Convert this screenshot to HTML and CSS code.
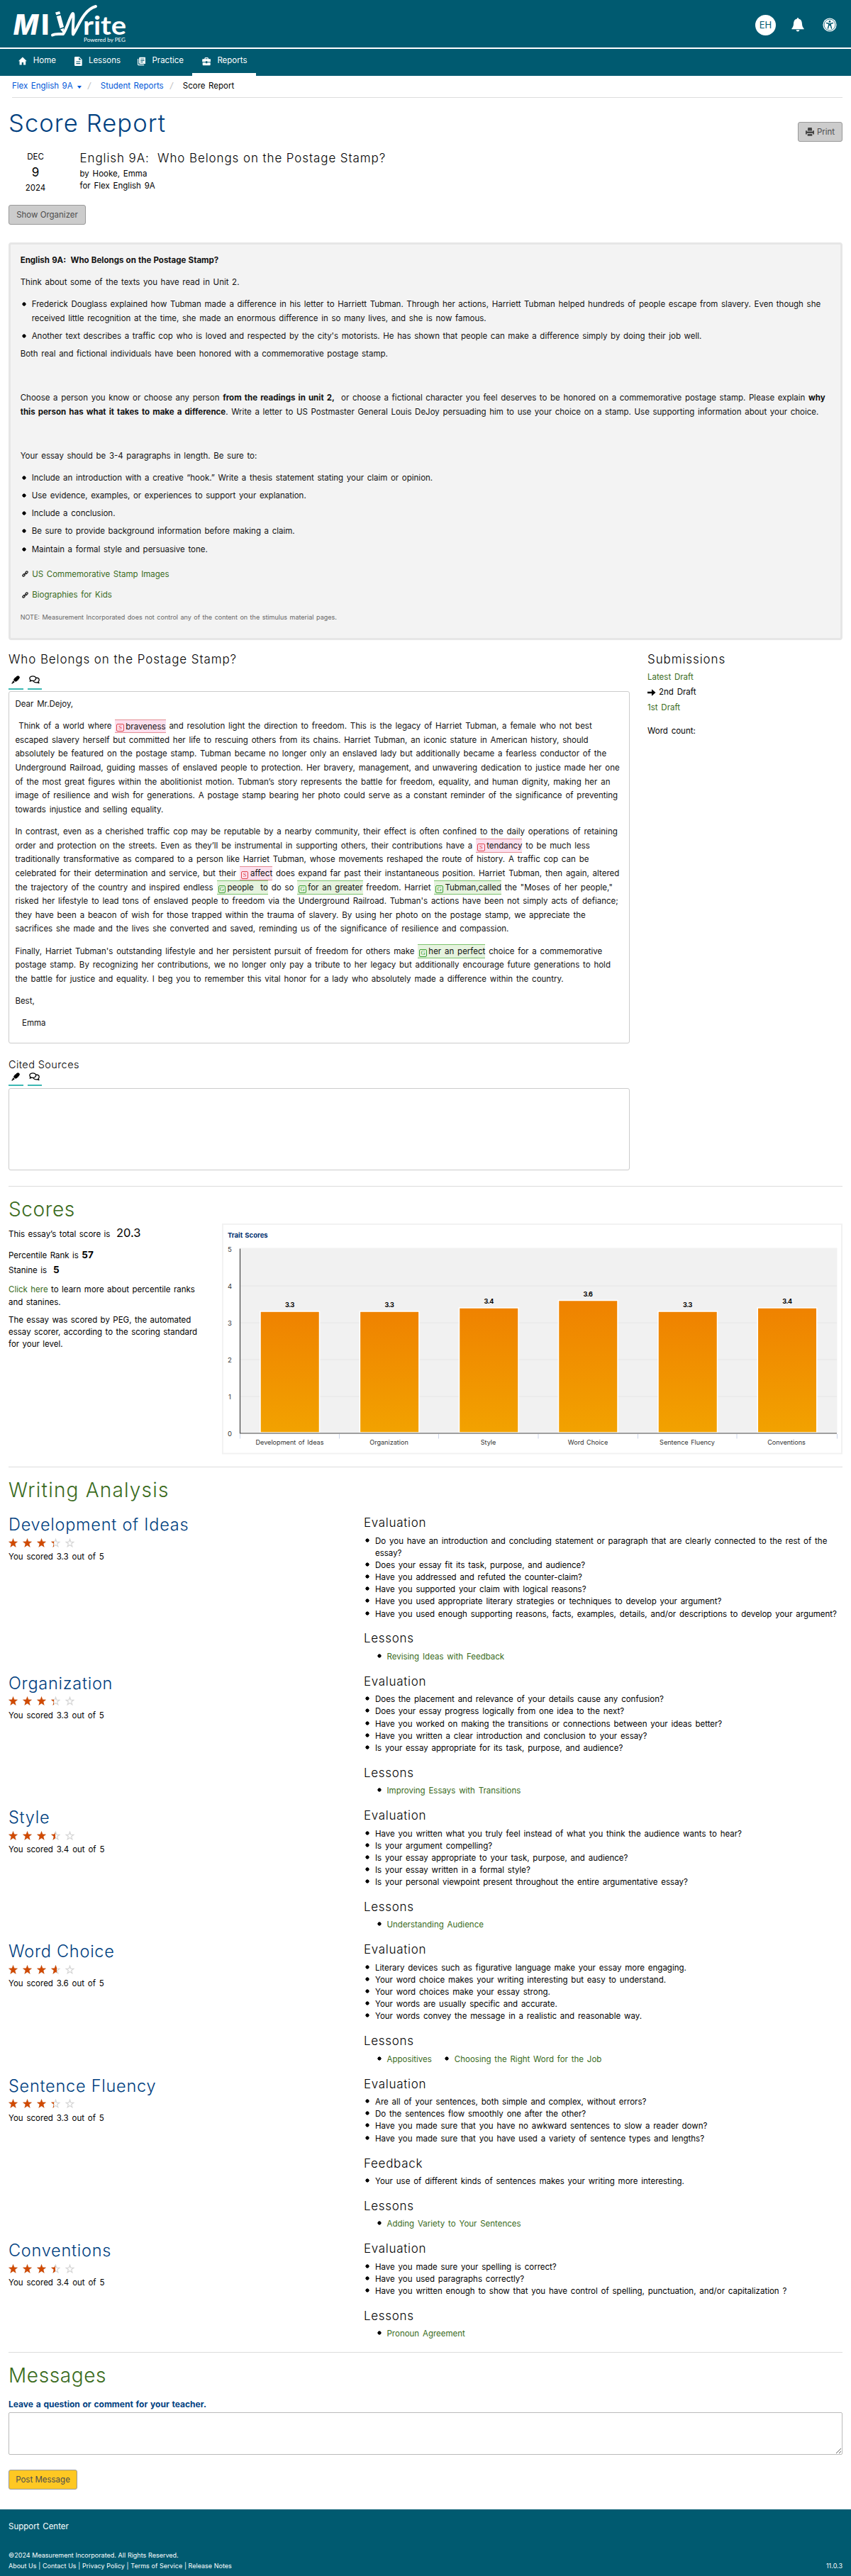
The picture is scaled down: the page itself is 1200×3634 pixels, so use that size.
FILE: index.html
```
<!DOCTYPE html>
<html lang="en">
<head>
    <meta charset="UTF-8">
    <meta name="viewport" content="width=device-width, initial-scale=1.0">
    <title>MI Write - Score Report</title>
    <link rel="stylesheet" href="styles.css">
</head>
<body>
    <!-- shared icons -->
    <svg class="defs" width="0" height="0">
        <symbol id="star" viewBox="0 0 12 12"><path d="M6 0 7.5 4.2 12 4.4 8.5 7.200 9.700 11.800 6 9.200 2.300 11.800 3.500 7.200 0 4.400 4.500 4.200Z"/></symbol>
        <symbol id="star-o" viewBox="0 0 12 12"><path d="M6 1.2 7.2 4.700 11 4.900 8 7.200 9.100 10.900 6 8.800 2.900 10.900 4 7.200 1 4.900 4.800 4.700Z" fill="none" stroke="#d6d6d6" stroke-width="1.1"/></symbol>
        <symbol id="stars5" viewBox="0 0 93 13"><use href="#star" x="0" width="13" height="13"/><use href="#star" x="20" width="13" height="13"/><use href="#star" x="40" width="13" height="13"/><use href="#star" x="60" width="13" height="13"/><use href="#star" x="80" width="13" height="13"/></symbol>
        <symbol id="stars5-o" viewBox="0 0 93 13"><use href="#star-o" x="0" width="13" height="13"/><use href="#star-o" x="20" width="13" height="13"/><use href="#star-o" x="40" width="13" height="13"/><use href="#star-o" x="60" width="13" height="13"/><use href="#star-o" x="80" width="13" height="13"/></symbol>
        <symbol id="marker" viewBox="0 0 12 12"><path d="M7 1.2 9.3.3Q10 0 10.6.7L11.6 1.7Q12.1 2.3 11.8 3L10.4 5.4 6.6 5.2ZM6.2 1.9 10 5.9 7.6 8.1Q7 8.6 6.2 8.6L5 8.6 3.2 6.8 3.3 5.6Q3.4 4.8 4 4.2ZM2.6 7.3 4.6 9.3 3.6 10.3 2.9 10.2 1.6 11.5 0 11.2 1.9 9 1.8 8.2Z"/></symbol>
        <symbol id="comments" viewBox="0 0 15 12"><path d="M5.3.8C2.700.8.8 2.300.8 4.100.8 5 1.300 5.700 1.900 6.300L1.200 8.200 3.500 7.200C6.800 7.900 9.700 6.300 9.700 4 9.700 2.200 7.800.8 5.300.8ZM10.300 3C12.600 3.200 14.200 4.600 14.200 6.300 14.200 7.200 13.800 8 13.100 8.600L13.900 10.600 11.500 9.600C9 10.200 6.800 9.400 5.900 7.700" fill="none" stroke="#000" stroke-width="1.300" stroke-linejoin="round"/></symbol>
        <symbol id="link" viewBox="0 0 10 10"><path d="M5.400 2.700 6.800 1.300Q7.800.6 8.600 1.400 9.400 2.200 8.700 3.200L7 4.900Q6.300 5.400 5.600 4.900M4.600 7.300 3.200 8.700Q2.200 9.400 1.400 8.600.6 7.800 1.300 6.800L3 5.100Q3.700 4.600 4.400 5.100M3.900 6.100 6.100 3.900" fill="none" stroke="#222" stroke-width="1.500" stroke-linecap="round"/></symbol>
    </svg>

    <header class="top">
        <svg class="logo" width="165" height="54" viewBox="0 0 165 54">
            <text class="logo-m" transform="translate(0 43) skewX(-10)" textLength="35" lengthAdjust="spacingAndGlyphs">M</text>
            <text class="logo-m" x="41" y="43">I</text>
            <path d="M61 11.500 67 10 68.300 13.500 62.300 15.200ZM62.800 17 68.600 15.400 73 32 67.500 34ZM67.900 35.600 73 33.700 72.500 40.500Z" fill="#fff"/>
            <path d="M57 43.500C62 41 68 42.500 72 42 78 34 81 18 85.500 13 88 12 85 36 86 42.500 93 33 100 8 118 3" fill="none" stroke="#fff" stroke-width="4" stroke-linecap="round" stroke-linejoin="round"/>
            <text class="logo-rite" x="100" y="43" textLength="61" lengthAdjust="spacingAndGlyphs">rite</text>
            <text class="logo-peg" x="101" y="53" textLength="59" lengthAdjust="spacingAndGlyphs">Powered by PEG</text>
        </svg>
        <div class="tools">
            <span class="avatar">EH</span>
            <svg class="bell" width="18" height="20" viewBox="0 0 18 20" fill="#fff"><path d="M9 0Q10.200 0 10.200 1.600C14 2.500 14.800 5.500 15 9 15.200 12 16 13.500 17.600 15.200V16.300H.4V15.200C2 13.500 2.800 12 3 9 3.200 5.500 4 2.500 7.800 1.600Q7.800 0 9 0ZM6.600 17.300H11.400Q11 19.600 9 19.600T6.600 17.300Z"/></svg>
            <svg width="20" height="20" viewBox="0 0 20 20"><circle cx="10" cy="10" r="9.600" fill="#fff"/><circle cx="10" cy="10" r="7.900" fill="none" stroke="#005a70" stroke-width=".8"/><circle cx="10" cy="5.400" r="1.400" fill="#005a70"/><path d="M5.500 7.500 8.700 8.200 8.700 10.500 7.500 15M14.500 7.500 11.300 8.200 11.300 10.500 12.500 15M8.600 8.700H11.400M9 10.500H11" fill="none" stroke="#005a70" stroke-width="1.400" stroke-linecap="round"/></svg>
        </div>
    </header>
    <nav class="nav">
        <a class="home"><svg width="12" height="12" viewBox="0 0 12 12"><path d="M6 .3 12 6.200H10.400V11.700H7.200V8H4.800V11.700H1.600V6.200H0Z"/></svg>Home</a>
        <a class="lessons"><svg width="11" height="13" viewBox="0 0 11 13"><path fill-rule="evenodd" d="M1.200 0H6.800L10.800 4V11.800Q10.800 13 9.600 13H1.200Q0 13 0 11.800V1.200Q0 0 1.200 0ZM6.200 1V4.600H9.800ZM2.400 6.500V7.600H8.400V6.500ZM2.400 9.100V10.200H8.400V9.100Z"/></svg>Lessons</a>
        <a class="practice"><svg width="13" height="13" viewBox="0 0 13 13"><path fill-rule="evenodd" d="M0 2.600H1.300V11.700H10.400V13H1.300Q0 13 0 11.700ZM3.800 0H11.700Q13 0 13 1.300V9.200Q13 10.500 11.700 10.500H3.800Q2.500 10.500 2.500 9.200V1.300Q2.500 0 3.800 0ZM4.700 2.300V3.400H10.800V2.300ZM4.700 4.700V5.800H10.800V4.700ZM4.700 7.100V8.200H8.600V7.100Z"/></svg>Practice</a>
        <a class="reports active"><svg width="13" height="13" viewBox="0 0 13 13"><path fill-rule="evenodd" d="M4.700.8H8.300L9.400 1.900V3.200H11.900Q12.800 3.200 12.800 4.200V7.400H7.700V6.300H5.300V7.400H.2V4.200Q.2 3.200 1.100 3.200H3.600V1.900ZM4.900 2.100V3.200H8.100V2.100ZM.7 8.300H5.300V9.500H7.700V8.300H12.300V11.500Q12.300 12.500 11.300 12.500H1.700Q.7 12.500.7 11.500Z"/></svg>Reports</a>
    </nav>

    <main>
        <div class="breadcrumb">
            <a>Flex English 9A</a><span class="caret"></span><i>/</i><a>Student Reports</a><i>/</i><span>Score Report</span>
        </div>
        <div class="title-row">
            <h1>Score Report</h1>
            <button class="btn print"><svg width="12" height="12" viewBox="0 0 12 12"><path d="M3.300 0H8.700L9.200 4.500H2.800ZM0 4.200H1.800V5.500H10.200V4.200H12V9.600H10.300V8H1.700V9.600H0ZM2.700 9H9.300V11.800H2.700Z"/></svg>Print</button>
        </div>
        <div class="meta">
            <div class="date">DEC<b>9</b>2024</div>
            <div class="info">
                <h2>English 9A:&nbsp; Who Belongs on the Postage Stamp?</h2>
                <div>by Hooke, Emma</div>
                <div>for Flex English 9A</div>
            </div>
        </div>
        <button class="btn organizer">Show Organizer</button>

        <div class="stimulus">
            <p class="strong">English 9A:&nbsp; Who Belongs on the Postage Stamp?</p>
            <p>Think about some of the texts you have read in Unit 2.</p>
            <ul>
                <li>Frederick Douglass explained how Tubman made a difference in his letter to Harriett Tubman. Through her actions, Harriett Tubman helped hundreds of people escape from slavery. Even though she<br>received little recognition at the time, she made an enormous difference in so many lives, and she is now famous.</li>
                <li>Another text describes a traffic cop who is loved and respected by the city's motorists. He has shown that people can make a difference simply by doing their job well.</li>
            </ul>
            <p>Both real and fictional individuals have been honored with a commemorative postage stamp.</p>
            <p>&nbsp;</p>
            <p>Choose a person you know or choose any person <b>from the readings in unit 2,</b>&nbsp; or choose a fictional character you feel deserves to be honored on a commemorative postage stamp. Please explain <b>why</b><br><b>this person has what it takes to make a difference</b>. Write a letter to US Postmaster General Louis DeJoy persuading him to use your choice on a stamp. Use supporting information about your choice.</p>
            <p>&nbsp;</p>
            <p>Your essay should be 3-4 paragraphs in length. Be sure to:</p>
            <ul>
                <li>Include an introduction with a creative “hook.” Write a thesis statement stating your claim or opinion.</li>
                <li>Use evidence, examples, or experiences to support your explanation.</li>
                <li>Include a conclusion.</li>
                <li>Be sure to provide background information before making a claim.</li>
                <li>Maintain a formal style and persuasive tone.</li>
            </ul>
            <div class="links">
                <div><svg width="9" height="9"><use href="#link"/></svg><a>US Commemorative Stamp Images</a></div>
                <div><svg width="9" height="9"><use href="#link"/></svg><a>Biographies for Kids</a></div>
            </div>
            <div class="note">NOTE: Measurement Incorporated does not control any of the content on the stimulus material pages.</div>
        </div>

        <div class="essay-row">
            <div class="essay-col">
                <h3>Who Belongs on the Postage Stamp?</h3>
                <div class="toolbar"><span><svg width="12" height="12"><use href="#marker"/></svg></span><span><svg width="15" height="12"><use href="#comments"/></svg></span></div>
                <div class="essay">
                    <p>Dear Mr.Dejoy,</p>
                    <p>&nbsp;Think of a world where <mark class="sp"><i>S</i>braveness</mark> and resolution light the direction to freedom. This is the legacy of Harriet Tubman, a female who not best<br>
                    escaped slavery herself but committed her life to rescuing others from its chains. Harriet Tubman, an iconic stature in American history, should<br>
                    absolutely be featured on the postage stamp. Tubman became no longer only an enslaved lady but additionally became a fearless conductor of the<br>
                    Underground Railroad, guiding masses of enslaved people to protection. Her bravery, management, and unwavering dedication to justice made her one<br>
                    of the most great figures within the abolitionist motion. Tubman’s story represents the battle for freedom, equality, and human dignity, making her an<br>
                    image of resilience and wish for generations. A postage stamp bearing her photo could serve as a constant reminder of the significance of preventing<br>
                    towards injustice and selling equality.</p>
                    <p>In contrast, even as a cherished traffic cop may be reputable by a nearby community, their effect is often confined to the daily operations of retaining<br>
                    order and protection on the streets. Even as they’ll be instrumental in supporting others, their contributions have a <mark class="sp"><i>S</i>tendancy</mark> to be much less<br>
                    traditionally transformative as compared to a person like Harriet Tubman, whose movements reshaped the route of history. A traffic cop can be<br>
                    celebrated for their determination and service, but their <mark class="sp"><i>S</i>affect</mark> does expand far past their instantaneous position. Harriet Tubman, then again, altered<br>
                    the trajectory of the country and inspired endless <mark class="gr"><i>G</i>people&nbsp; to</mark> do so <mark class="gr"><i>G</i>for an greater</mark> freedom. Harriet <mark class="gr"><i>G</i>Tubman,called</mark> the "Moses of her people,"<br>
                    risked her lifestyle to lead tons of enslaved people to freedom via the Underground Railroad. Tubman's actions have been not simply acts of defiance;<br>
                    they have been a beacon of wish for those trapped within the trauma of slavery. By using her photo on the postage stamp, we appreciate the<br>
                    sacrifices she made and the lives she converted and saved, reminding us of the significance of resilience and compassion.</p>
                    <p>Finally, Harriet Tubman's outstanding lifestyle and her persistent pursuit of freedom for others make <mark class="gr"><i>G</i>her an perfect</mark> choice for a commemorative<br>
                    postage stamp. By recognizing her contributions, we no longer only pay a tribute to her legacy but additionally encourage future generations to hold<br>
                    the battle for justice and equality. I beg you to remember this vital honor for a lady who absolutely made a difference within the country.</p>
                    <p>Best,</p>
                    <p>&nbsp; Emma</p>
                </div>
                <h4 class="cited-title">Cited Sources</h4>
                <div class="toolbar"><span><svg width="12" height="12"><use href="#marker"/></svg></span><span><svg width="15" height="12"><use href="#comments"/></svg></span></div>
                <div class="cited"></div>
            </div>
            <div class="submissions">
                <h3>Submissions</h3>
                <div><a>Latest Draft</a></div>
                <div><svg width="12" height="10" viewBox="0 0 12 10"><path d="M0 3.800H6V.3L11.500 5 6 9.700V6.200H0Z"/></svg>2nd Draft</div>
                <div><a>1st Draft</a></div>
                <div class="count">Word count:</div>
            </div>
        </div>

        <hr>
        <h2 class="section">Scores</h2>
        <div class="scores">
            <div class="score-text">
                <div class="total">This essay’s total score is <span>20.3</span></div>
                <div class="rank">Percentile Rank is <b>57</b></div>
                <div class="rank">Stanine is&nbsp; <b>5</b></div>
                <p><a>Click here</a> to learn more about percentile ranks<br>and stanines.</p>
                <p>The essay was scored by PEG, the automated<br>essay scorer, according to the scoring standard<br>for your level.</p>
            </div>
            <svg class="chart" width="875" height="325.5" viewBox="313 1726.500 875 325.500">
                <defs><linearGradient id="bar" x1="0" y1="0" x2="0" y2="1"><stop offset="0" stop-color="#ef8200"/><stop offset="1" stop-color="#f2a200"/></linearGradient></defs>
                <rect x="314" y="1727.500" width="873" height="323.500" fill="#fff" stroke="#f2f2f2" stroke-width="2"/>
                <text class="chart-title" x="321" y="1746.500">Trait Scores</text>
                <rect x="339" y="1761" width="841.500" height="261" fill="#f1f1f1"/>
                <path d="M339 1814.500H1180M339 1866.500H1180M339 1918.500H1180M339 1970.500H1180" stroke="#e6e6e6"/>
                <g fill="url(#bar)" stroke="#fff" stroke-width="1.500">
                    <rect x="367" y="1850.500" width="83.500" height="171"/>
                    <rect x="507.400" y="1850.500" width="83.500" height="171"/>
                    <rect x="647.500" y="1845.500" width="83.500" height="176"/>
                    <rect x="787.500" y="1835" width="83.500" height="186.500"/>
                    <rect x="928" y="1850.500" width="83.500" height="171"/>
                    <rect x="1068.300" y="1845.500" width="83.500" height="176"/>
                </g>
                <path d="M338.500 1762V2022.500H1180" fill="none" stroke="#444" stroke-width="1.200"/>
                <path d="M338.500 2023.500V2030M478.500 2023.500V2030M618.500 2023.500V2030M759 2023.500V2030M899.500 2023.500V2030M1039 2023.500V2030M1180.500 2023.500V2030" stroke="#ccd6eb"/>
                <g class="axis">
                    <text x="324" y="1766">5</text><text x="324" y="1818">4</text><text x="324" y="1870.500">3</text><text x="324" y="1922">2</text><text x="324" y="1974">1</text><text x="324" y="2026">0</text>
                </g>
                <g class="val">
                    <text x="408.500" y="1844.500">3.3</text><text x="549" y="1844.500">3.3</text><text x="689.300" y="1839.500">3.4</text><text x="829" y="1829.500">3.6</text><text x="969.500" y="1844.500">3.3</text><text x="1110" y="1839.500">3.4</text>
                </g>
                <g class="cat">
                    <text x="408.500" y="2038.500">Development of Ideas</text><text x="548.500" y="2038.500">Organization</text><text x="688.500" y="2038.500">Style</text><text x="829" y="2038.500">Word Choice</text><text x="969" y="2038.500">Sentence Fluency</text><text x="1109" y="2038.500">Conventions</text>
                </g>
            </svg>
        </div>

        <hr class="hr-analysis">
        <h2 class="section analysis-title">Writing Analysis</h2>
        <div class="trait">
            <div>
                <h3>Development of Ideas</h3>
                <div class="stars"><svg><use href="#stars5-o"/></svg><div class="fill" style="width: 64px"><svg><use href="#stars5"/></svg></div></div>
                <div>You scored 3.3 out of 5</div>
            </div>
            <div>
                <h4>Evaluation</h4>
                <ul>
                    <li>Do you have an introduction and concluding statement or paragraph that are clearly connected to the rest of the<br>essay?</li>
                    <li>Does your essay fit its task, purpose, and audience?</li>
                    <li>Have you addressed and refuted the counter-claim?</li>
                    <li>Have you supported your claim with logical reasons?</li>
                    <li>Have you used appropriate literary strategies or techniques to develop your argument?</li>
                    <li>Have you used enough supporting reasons, facts, examples, details, and/or descriptions to develop your argument?</li>
                </ul>
                <h4>Lessons</h4>
                <ul class="lesson"><li><a>Revising Ideas with Feedback</a></li></ul>
            </div>
        </div>
        <div class="trait">
            <div>
                <h3>Organization</h3>
                <div class="stars"><svg><use href="#stars5-o"/></svg><div class="fill" style="width: 64px"><svg><use href="#stars5"/></svg></div></div>
                <div>You scored 3.3 out of 5</div>
            </div>
            <div>
                <h4>Evaluation</h4>
                <ul>
                    <li>Does the placement and relevance of your details cause any confusion?</li>
                    <li>Does your essay progress logically from one idea to the next?</li>
                    <li>Have you worked on making the transitions or connections between your ideas better?</li>
                    <li>Have you written a clear introduction and conclusion to your essay?</li>
                    <li>Is your essay appropriate for its task, purpose, and audience?</li>
                </ul>
                <h4>Lessons</h4>
                <ul class="lesson"><li><a>Improving Essays with Transitions</a></li></ul>
            </div>
        </div>
        <div class="trait">
            <div>
                <h3>Style</h3>
                <div class="stars"><svg><use href="#stars5-o"/></svg><div class="fill" style="width: 65.5px"><svg><use href="#stars5"/></svg></div></div>
                <div>You scored 3.4 out of 5</div>
            </div>
            <div>
                <h4>Evaluation</h4>
                <ul>
                    <li>Have you written what you truly feel instead of what you think the audience wants to hear?</li>
                    <li>Is your argument compelling?</li>
                    <li>Is your essay appropriate to your task, purpose, and audience?</li>
                    <li>Is your essay written in a formal style?</li>
                    <li>Is your personal viewpoint present throughout the entire argumentative essay?</li>
                </ul>
                <h4>Lessons</h4>
                <ul class="lesson"><li><a>Understanding Audience</a></li></ul>
            </div>
        </div>
        <div class="trait">
            <div>
                <h3>Word Choice</h3>
                <div class="stars"><svg><use href="#stars5-o"/></svg><div class="fill" style="width: 68px"><svg><use href="#stars5"/></svg></div></div>
                <div>You scored 3.6 out of 5</div>
            </div>
            <div>
                <h4>Evaluation</h4>
                <ul>
                    <li>Literary devices such as figurative language make your essay more engaging.</li>
                    <li>Your word choice makes your writing interesting but easy to understand.</li>
                    <li>Your word choices make your essay strong.</li>
                    <li>Your words are usually specific and accurate.</li>
                    <li>Your words convey the message in a realistic and reasonable way.</li>
                </ul>
                <h4>Lessons</h4>
                <ul class="lesson"><li><a>Appositives</a></li><li><a>Choosing the Right Word for the Job</a></li></ul>
            </div>
        </div>
        <div class="trait">
            <div>
                <h3>Sentence Fluency</h3>
                <div class="stars"><svg><use href="#stars5-o"/></svg><div class="fill" style="width: 64px"><svg><use href="#stars5"/></svg></div></div>
                <div>You scored 3.3 out of 5</div>
            </div>
            <div>
                <h4>Evaluation</h4>
                <ul>
                    <li>Are all of your sentences, both simple and complex, without errors?</li>
                    <li>Do the sentences flow smoothly one after the other?</li>
                    <li>Have you made sure that you have no awkward sentences to slow a reader down?</li>
                    <li>Have you made sure that you have used a variety of sentence types and lengths?</li>
                </ul>
                <h4>Feedback</h4>
                <ul><li>Your use of different kinds of sentences makes your writing more interesting.</li></ul>
                <h4>Lessons</h4>
                <ul class="lesson"><li><a>Adding Variety to Your Sentences</a></li></ul>
            </div>
        </div>
        <div class="trait">
            <div>
                <h3>Conventions</h3>
                <div class="stars"><svg><use href="#stars5-o"/></svg><div class="fill" style="width: 65.5px"><svg><use href="#stars5"/></svg></div></div>
                <div>You scored 3.4 out of 5</div>
            </div>
            <div>
                <h4>Evaluation</h4>
                <ul>
                    <li>Have you made sure your spelling is correct?</li>
                    <li>Have you used paragraphs correctly?</li>
                    <li>Have you written enough to show that you have control of spelling, punctuation, and/or capitalization ?</li>
                </ul>
                <h4>Lessons</h4>
                <ul class="lesson"><li><a>Pronoun Agreement</a></li></ul>
            </div>
        </div>

        <hr class="hr-messages">
        <h2 class="section">Messages</h2>
        <label for="message">Leave a question or comment for your teacher.</label>
        <textarea id="message"></textarea>
        <button class="btn post">Post Message</button>
    </main>

    <footer>
        <div>Support Center</div>
        <div class="legal">
            <div>©2024 Measurement Incorporated. All Rights Reserved.<br>About Us | Contact Us | Privacy Policy | Terms of Service | Release Notes</div>
            <div>11.0.3</div>
        </div>
    </footer>
</body>
</html>
```
FILE: styles.css
```
* {
    box-sizing: border-box;
}
body {
    margin: 0;
    font-family: Inter, "Noto Sans", sans-serif;
    font-size: 11.5px;
    line-height: 17.15px;
    word-spacing: 1.6px;
    color: #000;
    background: #fff;
    white-space: nowrap;
}
h1, h2, h3, h4, p, ul {
    margin: 0;
    padding: 0;
    font-weight: 400;
}
h1, h2, h3, h4 {
    font-weight: 300;
    word-spacing: 0;
}
svg {
    display: block;
}
.defs {
    position: absolute;
}
a {
    color: #3a6b1c;
}

/* header */
.top {
    height: 69px;
    padding: 6px 20px 0 17px;
    border-bottom: 2px solid #fff;
    background: #005a70;
    display: flex;
    justify-content: space-between;
}
.logo {
    overflow: visible;
}
.logo text {
    fill: #fff;
    word-spacing: 0;
}
.logo-m {
    font: 800 40px Inter, sans-serif;
}
.logo-rite {
    font: 700 36px Lato, sans-serif;
}
.logo-peg {
    font: 8px Lato, sans-serif;
}
.tools {
    height: 58px;
    display: flex;
    align-items: center;
}
.avatar {
    width: 29px;
    height: 29px;
    border-radius: 50%;
    background: #fff;
    color: #005a70;
    font-size: 13px;
    line-height: 29px;
    text-align: center;
}
.bell {
    margin: 0 26px 0 22px;
}
.nav {
    height: 38px;
    background: #005a70;
    padding-left: 6px;
    display: flex;
}
.nav a {
    height: 38px;
    padding: 0 12px 0 14px;
    border-bottom: 4.500px solid transparent;
    color: #fff;
    font-size: 11.5px;
    display: flex;
    align-items: center;
}
.nav svg {
    fill: #fff;
    margin-right: 9px;
}
.nav .home {
    width: 85px;
    padding-left: 20px;
}
.nav .lessons {
    width: 91px;
}
.nav .practice {
    width: 89px;
    padding-left: 12px;
}
.nav .reports {
    width: 89.500px;
}
.nav .active {
    border-color: #fff;
}

main {
    padding: 0 12px;
}
.breadcrumb {
    height: 31px;
    margin-left: 5px;
    border-bottom: 1px solid #ddd;
    display: flex;
    align-items: center;
    word-spacing: 1.300px;
}
.breadcrumb a {
    color: #0057d8;
}
.breadcrumb i {
    color: #bbb;
    margin: 0 14px 0 9px;
}
.caret {
    border: 3.500px solid transparent;
    border-top: 4px solid #0057d8;
    border-bottom: 0;
    margin: 2px 0 0 6px;
}
.title-row {
    height: 61.500px;
    display: flex;
    justify-content: space-between;
    align-items: flex-end;
}
h1 {
    margin-bottom: 6.500px;
    font-size: 34.5px;
    line-height: 38px;
    letter-spacing: 1.1px;
    color: #00407f;
}
.btn {
    display: flex;
    align-items: center;
    justify-content: center;
    height: 28px;
    padding: 0;
    border: 1px solid #999;
    border-radius: 3px;
    background: #ccc;
    color: #4d4d4d;
    font: 11.5px Inter, sans-serif;
}
.print {
    width: 63px;
}
.print svg {
    fill: #444;
    margin-right: 4px;
}
.meta {
    display: flex;
    padding-top: 10.500px;
}
.date {
    width: 76px;
    text-align: center;
    line-height: 22px;
}
.date b {
    display: block;
    font-size: 17px;
    font-weight: 400;
}
.info {
    margin: 2px 0 0 24.500px;
}
.info h2, h3 {
    font-size: 17px;
    line-height: 22px;
    letter-spacing: .9px;
}
.info h2 {
    margin-bottom: 2.500px;
}
.organizer {
    width: 109px;
    margin-top: 13px;
}

/* prompt */
.stimulus {
    height: 561px;
    margin-top: 24.500px;
    border: 3px solid #e6e6e6;
    border-radius: 4px;
    background: #f3f3f3;
    padding: 13.500px 13.700px;
    line-height: 19.600px;
    word-spacing: 1.400px;
    color: #111;
}
.stimulus p {
    margin-bottom: 11.400px;
}
.stimulus .strong {
    font-weight: 700;
    word-spacing: .5px;
}
.stimulus li {
    margin-bottom: 5.700px;
}
ul {
    list-style: none;
}
li {
    padding-left: 16px;
    background: radial-gradient(circle at 5px 8px, #000 2.300px, transparent 2.900px) no-repeat;
}
.stimulus li {
    background-position: 0 1px;
}
.links {
    margin-top: 15.300px;
}
.links div {
    display: flex;
    align-items: center;
    margin-bottom: 10.200px;
}
.links svg {
    margin: -2px 5px 0 2.500px;
}
.note {
    margin-top: 13px;
    font-size: 9px;
    line-height: 16px;
    word-spacing: 1px;
    color: #666;
}

/* essay */
.essay-row {
    display: flex;
    gap: 25px;
    padding-top: 16.500px;
}
.essay-col {
    width: 876px;
}
.toolbar {
    display: flex;
    gap: 6px;
    margin: 8.400px 0 2.500px;
}
.toolbar span {
    width: 20.500px;
    height: 23.500px;
    padding-bottom: 2px;
    border-bottom: 2px solid #3cb8b3;
    display: flex;
    align-items: center;
    justify-content: center;
}
.essay {
    height: 497px;
    border: 1px solid #ccc;
    border-radius: 3px;
    padding: 7.700px 8.400px;
    line-height: 19.630px;
    word-spacing: 1.600px;
    color: #111;
}
.essay p {
    margin-bottom: 11.500px;
}
mark {
    color: #111;
    padding: 1.500px 0 2px 2px;
    border: solid;
    border-width: 1px 0;
}
mark i {
    display: inline-block;
    width: 10.500px;
    height: 11px;
    margin-right: 2.500px;
    border: 1px solid;
    border-radius: 2px;
    font: 8.5px/9px "Liberation Serif", serif;
    text-align: center;
    vertical-align: -1px;
}
.sp {
    background: #fce0ee;
    border-color: #e58d95;
}
.sp i {
    color: #e0474f;
}
.gr {
    background: #e6f3df;
    border-color: #7cc36d;
}
.gr i {
    color: #3f9f35;
}
.cited-title {
    margin-top: 20px;
    font-size: 14.5px;
    line-height: 20px;
    letter-spacing: .4px;
}
.cited-title + .toolbar {
    margin-top: -3.500px;
}
.cited {
    height: 116px;
    border: 1px solid #ccc;
    border-radius: 3px;
}
.submissions div {
    line-height: 21.500px;
    display: flex;
    align-items: center;
}
.submissions h3 {
    margin-bottom: 3.500px;
}
.submissions svg {
    margin-right: 4px;
}
.submissions .count {
    margin-top: 12px;
}

/* scores */
hr {
    height: 1px;
    margin: 22px 0 16px;
    border: 0;
    background: #ddd;
}
.section {
    font-size: 28px;
    line-height: 32px;
    letter-spacing: .6px;
    color: #3a6b1c;
}
.scores {
    display: flex;
    justify-content: space-between;
    padding-top: 4.500px;
}
.score-text {
    padding-top: 5px;
    word-spacing: 1.200px;
}
.total {
    line-height: 20px;
    margin-bottom: 10px;
}
.total span {
    font-size: 16.5px;
    margin-left: 4px;
}
.total span, .rank b {
    line-height: 1;
}
.rank {
    line-height: 21px;
}
.rank b {
    font-size: 13.5px;
}
.score-text p {
    margin-top: 8px;
}
.chart text {
    word-spacing: 1px;
}
.chart-title {
    font-size: 9.5px;
    font-weight: 700;
    fill: #003070;
}
.axis, .val, .cat {
    font-size: 9.5px;
    text-anchor: middle;
    fill: #333;
}
.val {
    font-size: 9px;
    font-weight: 700;
    letter-spacing: -.4px;
    fill: #000;
}
.cat {
    font-size: 9.1px;
}

/* writing analysis */
.hr-analysis {
    margin: 17px 0 16.500px;
}
.analysis-title {
    margin-bottom: 19.800px;
    letter-spacing: 1.2px;
}
.trait {
    display: grid;
    grid-template-columns: 501px 1fr;
}
.trait h3 {
    font-size: 23.5px;
    line-height: 26px;
    letter-spacing: .75px;
    color: #00407f;
}
.trait h4 {
    font-size: 17px;
    line-height: 20px;
    letter-spacing: .7px;
    margin-bottom: 7.400px;
}
.trait ul {
    margin-bottom: 15.800px;
}
.trait li {
    background-position: 0 -1px;
}
.stars {
    position: relative;
    height: 13px;
    margin: 5.500px 0 5.400px;
}
.stars svg {
    width: 93px;
    height: 13px;
    fill: #d04a02;
}
.fill {
    position: absolute;
    top: 0;
    left: 0;
    overflow: hidden;
}
.lesson {
    display: flex;
    gap: 16px;
    margin-left: 16.500px;
}

/* messages */
.hr-messages {
    margin-top: 1px;
}
label {
    display: block;
    margin: 16px 0 2.500px;
    font-size: 12px;
    font-weight: 700;
    word-spacing: .9px;
    color: #00407f;
}
textarea {
    display: block;
    width: 100%;
    height: 60.500px;
    border: 1px solid #bbb;
    border-radius: 2px;
}
.post {
    width: 97px;
    margin: 21px 0 28px;
    background: #fec823;
}
footer {
    height: 94px;
    padding: 16px 12px 0;
    background: #005a70;
    color: #fff;
}
.legal {
    display: flex;
    justify-content: space-between;
    align-items: flex-end;
    margin-top: 24.500px;
    font-size: 9px;
    line-height: 14.500px;
    word-spacing: .2px;
}
```
